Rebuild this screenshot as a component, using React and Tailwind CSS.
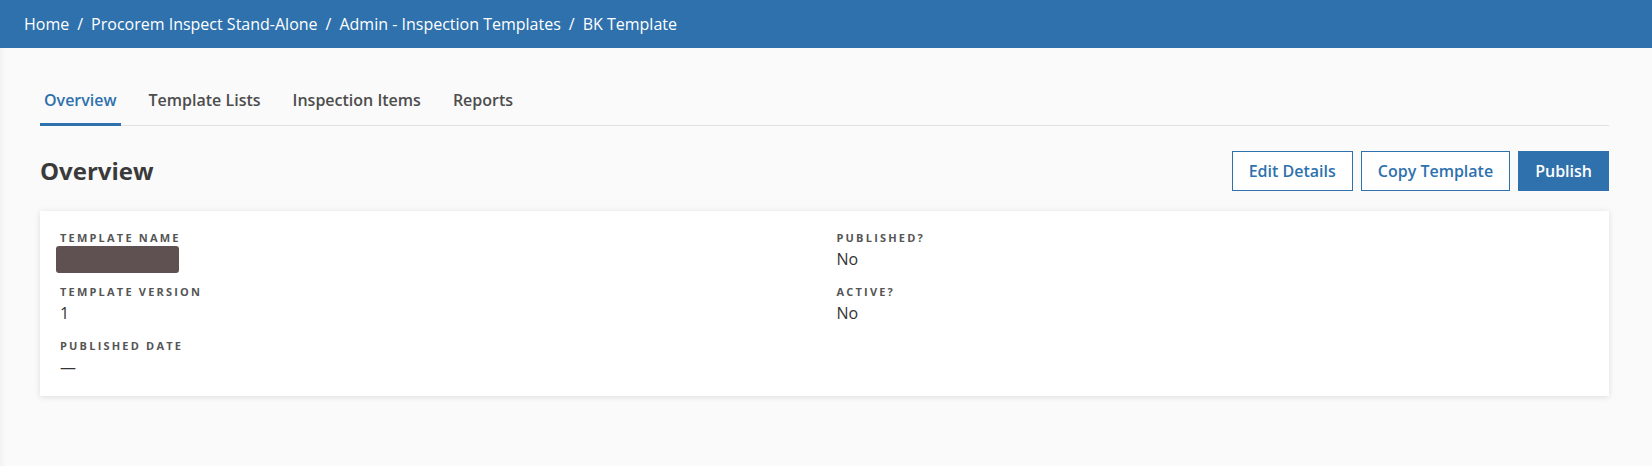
import React from 'react'

const crumbs = ["Home", "Procorem Inspect Stand-Alone", "Admin - Inspection Templates", "BK Template"]
const tabs = ["Overview", "Template Lists", "Inspection Items", "Reports"]

const Field = ({ label, children }) => (
  <div>
    <div className="text-[11px] leading-4 font-bold tracking-[0.2em] text-[#555555] uppercase">{label}</div>
    <div className="mt-0.5 h-[22px] flex items-center text-base leading-[22px] text-[#333333]">{children}</div>
  </div>
)

const App = () => {
  return (
    <div className="min-h-[466px] flex flex-col bg-[#fafafa] font-['Open_Sans',sans-serif]">
      <div className="h-12 shrink-0 bg-[#2e71ad] flex items-center pl-6 text-white text-base">
        {crumbs.map((c, i) => (
          <React.Fragment key={c}>
            {i > 0 && <span className="px-2">/</span>}
            <span>{c}</span>
          </React.Fragment>
        ))}
      </div>

      <div className="flex-1 pl-10 pr-[43px] shadow-[inset_6px_0_6px_-5px_rgba(0,0,0,0.06)] pb-10">
        <div className="pt-10 flex gap-6 border-b border-[#e2e2e2]">
          {tabs.map((t, i) => (
            <div
              key={t}
              className={
                i === 0
                  ? "-mb-px px-1 pb-[11px] border-b-[3px] border-[#2e71ad] text-[#2e71ad] font-semibold text-base leading-6"
                  : "-mb-px px-1 pb-[11px] border-b-[3px] border-transparent text-[#4d4d4d] font-semibold text-base leading-6"
              }
            >
              {t}
            </div>
          ))}
        </div>

        <div className="mt-[25px] flex items-center justify-between">
          <h1 className="text-2xl font-bold text-[#3a3a3a]">Overview</h1>
          <div className="flex gap-2">
            <button className="h-10 px-4 border border-[#2e71ad] bg-white text-[#2e71ad] font-semibold text-base">Edit Details</button>
            <button className="h-10 px-4 border border-[#2e71ad] bg-white text-[#2e71ad] font-semibold text-base">Copy Template</button>
            <button className="h-10 px-4 border border-[#2e71ad] bg-[#2e71ad] text-white font-semibold text-base">Publish</button>
          </div>
        </div>

        <div className="mt-5 bg-white shadow-[0_1px_6px_rgba(0,0,0,0.12)] px-5 pt-[19px] pb-[18px] grid grid-cols-2 gap-x-6">
          <div className="flex flex-col gap-[14px]">
            <Field label="Template Name">
              <div className="-ml-1 shrink-0 w-[123px] h-[27px] rounded-[3px] bg-[#5f5151]"></div>
            </Field>
            <Field label="Template Version">1</Field>
            <Field label="Published Date">—</Field>
          </div>
          <div className="flex flex-col gap-[14px]">
            <Field label="Published?">No</Field>
            <Field label="Active?">No</Field>
          </div>
        </div>
      </div>
    </div>
  )
}

export default App
